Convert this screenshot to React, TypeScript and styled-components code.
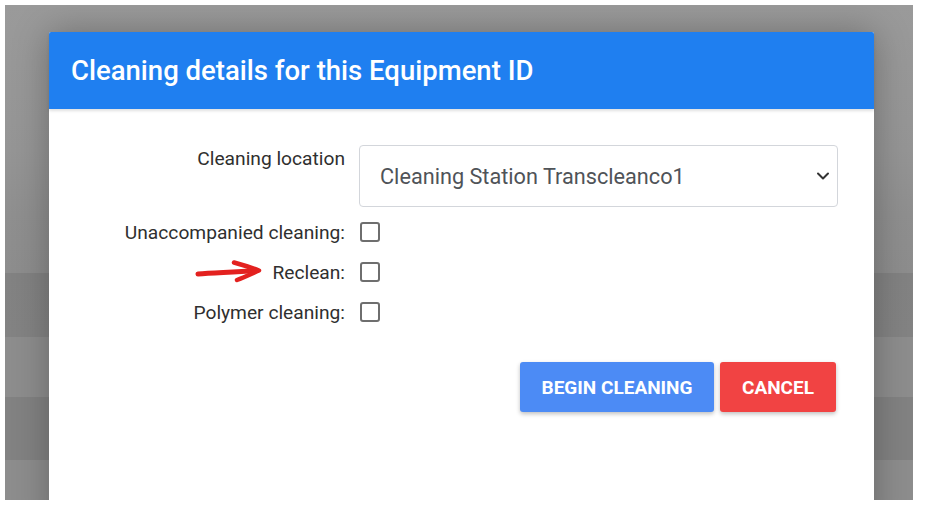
import React from "react"
import styled, { createGlobalStyle } from "styled-components"

const GlobalStyle = createGlobalStyle`
  html, body {
    margin: 0;
    padding: 0;
    background: #ffffff;
    font-family: Roboto, "Liberation Sans", Arial, sans-serif;
  }
`

// the dimmed page behind the dialog, with its table rows still showing through
const Backdrop = styled.div`
  margin: 5px 14px 0 5px;
  height: 495px;
  padding: 27px 39px 0 44px;
  box-sizing: border-box;
  overflow: hidden;
  background: linear-gradient(
    to bottom,
    #9a9a9a 0px,
    #959595 145px,
    #8f8f8f 208px,
    #8d8d8d 268px,
    #828282 268px,
    #838383 332px,
    #8d8d8d 332px,
    #8d8d8d 392px,
    #828282 392px,
    #828282 455px,
    #8d8d8d 455px
  );
`

const Dialog = styled.div`
  width: 825px;
  height: 500px;
  background: #ffffff;
  border-radius: 2px 2px 0 0;
  box-shadow: 0 0 36px rgba(0, 0, 0, 0.28);
  display: flex;
  flex-direction: column;
`

const Header = styled.div`
  height: 77px;
  display: flex;
  align-items: center;
  padding: 0 22px;
  background: #1f7ff0;
  border-radius: 2px 2px 0 0;
  box-shadow: 0 2px 3px rgba(0, 0, 0, 0.12);
  h2 {
    margin: 0;
    color: #ffffff;
    font-size: 27.5px;
    font-weight: 500;
    letter-spacing: 0;
  }
`

const Body = styled.div`
  padding: 36px 36px 0 0;
`

const Form = styled.div`
  display: grid;
  grid-template-columns: 296px 479px;
  column-gap: 14px;
`

const Label = styled.label<{ $top?: boolean }>`
  display: flex;
  justify-content: flex-end;
  align-items: ${(p) => (p.$top ? "flex-start" : "center")};
  padding-top: ${(p) => (p.$top ? "2px" : "0")};
  height: ${(p) => (p.$top ? "auto" : "40px")};
  font-size: 19.2px;
  color: #2f2f2f;
  white-space: nowrap;
`

const LabelText = styled.span`
  position: relative;
`

const Field = styled.div<{ $first?: boolean }>`
  position: relative;
  display: flex;
  align-items: center;
  height: ${(p) => (p.$first ? "62px" : "40px")};
  margin-bottom: ${(p) => (p.$first ? "5px" : "0")};
`

const Select = styled.select`
  appearance: none;
  width: 100%;
  height: 62px;
  padding: 0 40px 0 20px;
  border: 1px solid #d3d6db;
  border-radius: 4px;
  background: #ffffff;
  font-family: Roboto, "Liberation Sans", Arial, sans-serif;
  font-size: 21.7px;
  color: #4f5358;
  outline: none;
`

const Chevron = styled.svg`
  position: absolute;
  right: 8px;
  top: 25px;
  width: 14px;
  height: 12px;
  pointer-events: none;
`

const Checkbox = styled.input.attrs({ type: "checkbox" })`
  appearance: none;
  margin: 0 0 0 1px;
  width: 20px;
  height: 20px;
  border: 2px solid #6e6e6e;
  border-radius: 3px;
  background: #ffffff;
  box-sizing: border-box;
`

// hand-drawn annotation pointing at the label
const Arrow = styled.svg`
  position: absolute;
  left: -77px;
  top: -2px;
  width: 68px;
  height: 24px;
`

const Actions = styled.div`
  display: flex;
  justify-content: flex-end;
  gap: 6px;
  margin-top: 30px;
  padding-right: 2px;
`

const Button = styled.button<{ $tone: "primary" | "danger" }>`
  height: 50px;
  width: ${(p) => (p.$tone === "primary" ? "194px" : "116px")};
  padding: 0;
  border: none;
  border-radius: 3px;
  background: ${(p) => (p.$tone === "primary" ? "#4c8bf5" : "#f14343")};
  color: #ffffff;
  font-family: Roboto, "Liberation Sans", Arial, sans-serif;
  font-size: 19px;
  font-weight: 700;
  text-transform: uppercase;
  box-shadow: 0 2px 4px rgba(0, 0, 0, 0.25);
  cursor: pointer;
`

const checks = ["Unaccompanied cleaning:", "Reclean:", "Polymer cleaning:"]

export default function App() {
  return (
    <>
      <GlobalStyle />
      <Backdrop>
        <Dialog>
          <Header>
            <h2>Cleaning details for this Equipment ID</h2>
          </Header>
          <Body>
            <Form>
              <Label $top>Cleaning location</Label>
              <Field $first>
                <Select defaultValue="t1">
                  <option value="t1">Cleaning Station Transcleanco1</option>
                </Select>
                <Chevron viewBox="0 0 14 12">
                  <path d="M2 3.5 L7 8.5 L12 3.5" fill="none" stroke="#333" strokeWidth="2" strokeLinecap="round" strokeLinejoin="round" />
                </Chevron>
              </Field>
              {checks.map((text) => (
                <React.Fragment key={text}>
                  <Label>
                    <LabelText>
                      {text === "Reclean:" && (
                        <Arrow viewBox="0 0 68 24">
                          <path
                            d="M3 15 C18 13.5 38 13.5 62 11.5"
                            fill="none"
                            stroke="#e3211f"
                            strokeWidth="5"
                            strokeLinecap="round"
                          />
                          <path
                            d="M39 3.5 C48 6 56 8.5 64 11.5 C57 14.5 50 18 42 21"
                            fill="none"
                            stroke="#e3211f"
                            strokeWidth="4.5"
                            strokeLinecap="round"
                            strokeLinejoin="round"
                          />
                        </Arrow>
                      )}
                      {text}
                    </LabelText>
                  </Label>
                  <Field>
                    <Checkbox />
                  </Field>
                </React.Fragment>
              ))}
            </Form>
            <Actions>
              <Button $tone="primary">Begin cleaning</Button>
              <Button $tone="danger">Cancel</Button>
            </Actions>
          </Body>
        </Dialog>
      </Backdrop>
    </>
  )
}
